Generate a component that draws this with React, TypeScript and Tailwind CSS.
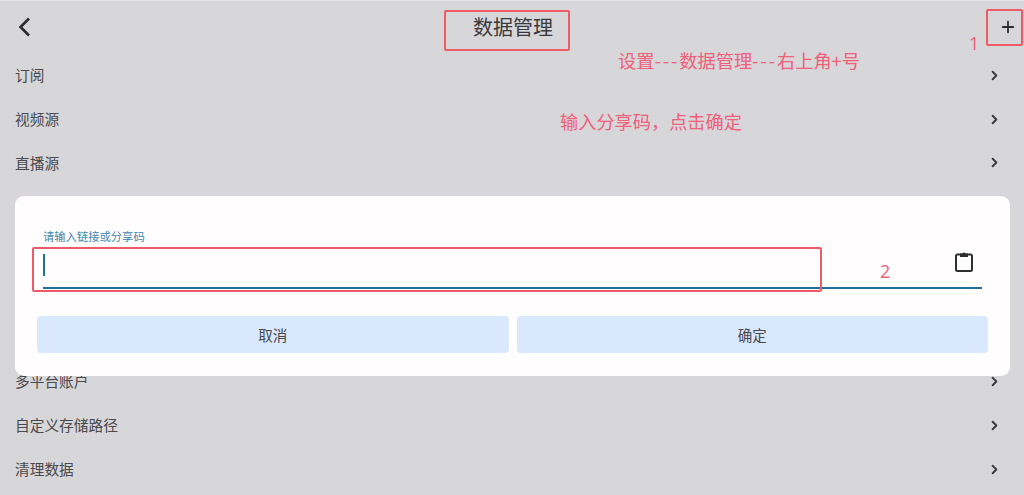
import { ChevronRight, Plus } from "lucide-react";

const rows = ["订阅", "视频源", "直播源", "", "", "", "", "多平台账户", "自定义存储路径", "清理数据"];

const cjk = { fontFamily: '"Noto Sans CJK SC", "Noto Sans", sans-serif' };

function Row({ label }: { label: string }) {
  return (
    <div className="flex h-[43.75px] items-center justify-between pl-[15px] pr-[22px]">
      <span className="text-[14.7px] leading-none text-[#4a4a4c]">{label}</span>
      <ChevronRight size={15} strokeWidth={3} className="text-[#3a3a3e]" />
    </div>
  );
}

function Dialog() {
  return (
    <div className="absolute left-[15px] top-[195px] h-[180px] w-[995px] rounded-[9px] bg-[#fffdfe] px-[22px] pt-[33px]">
      <div className="px-[6px]">
        <div className="text-[11.3px] leading-[14px] text-[#3f88ad]">请输入链接或分享码</div>
        <div className="flex h-[46px] items-center justify-between border-b-2 border-[#1f6f9c] pb-[1px]">
          <div className="h-[22px] w-[2px] bg-[#1f6f9c]" />
          <svg width="20" height="22" viewBox="0 0 20 22" fill="none" className="mr-[8px] mb-[5px]">
            <rect x="2" y="3.5" width="16" height="16.5" rx="1.5" stroke="#2e2e30" strokeWidth="2" />
            <path d="M6 2.5h2.5a1.6 1.6 0 0 1 3 0H14v3.5H6z" fill="#2e2e30" />
          </svg>
        </div>
      </div>
      <div className="mt-[27px] flex gap-[8px]">
        <button className="h-[37px] flex-1 rounded-[4px] bg-[#d9e8fd] text-[14.5px] text-[#47494d]">取消</button>
        <button className="h-[37px] flex-1 rounded-[4px] bg-[#d9e8fd] text-[14.5px] text-[#47494d]">确定</button>
      </div>
      {/* red box round the input */}
      <div className="absolute left-[17px] top-[51px] h-[45px] w-[790px] rounded-[2px] border-2 border-[#ee5b66]" />
      <span className="absolute left-[865px] top-[63px] text-[18px] leading-[24px] text-[#f0607a]" style={{ fontFamily: '"Open Sans", sans-serif' }}>2</span>
    </div>
  );
}

export default function App() {
  return (
    <div className="relative h-[495px] w-[1024px] overflow-hidden border-t border-[#e6e5e7] bg-[#d7d6d9]" style={cjk}>
      <div className="flex h-[52.5px] items-center justify-between pl-[15px] pr-[6px]">
        <svg width="20" height="24" viewBox="0 0 20 24" fill="none" className="mt-[-1px]">
          <path d="M14 3.5 5.5 12l8.500 8.500" stroke="#2c2c2e" strokeWidth="2.600" />
        </svg>
        <span className="ml-[-8px] text-[20px] leading-none text-[#3a3a3c]">数据管理</span>
        <Plus size={18} strokeWidth={2.4} className="mr-[1px] mt-[-1px] text-[#2c2c2e]" />
      </div>
      {rows.map((label, i) => (
        <Row key={i} label={label} />
      ))}

      {/* annotations drawn over the screenshot */}
      <div className="absolute left-[444px] top-[9px] h-[41px] w-[126px] rounded-[2px] border-2 border-[#ee5b66]" />
      <div className="absolute left-[986px] top-[8px] h-[37px] w-[37px] rounded-[2px] border-2 border-[#ee5b66]" />
      <span className="absolute left-[969px] top-[30px] text-[18px] leading-[24px] text-[#f0607a]" style={{ fontFamily: '"Open Sans", sans-serif' }}>1</span>
      <span className="absolute left-[618px] top-[47px] text-[18.2px] leading-[24px] whitespace-nowrap text-[#f0607a]">
        设置<span className="tracking-[2px]">---</span>数据管理<span className="tracking-[2px]">---</span>右上角+号
      </span>
      <span className="absolute left-[560px] top-[108px] text-[18.2px] leading-[24px] whitespace-nowrap text-[#f0607a]">输入分享码，点击确定</span>

      <Dialog />
    </div>
  );
}
